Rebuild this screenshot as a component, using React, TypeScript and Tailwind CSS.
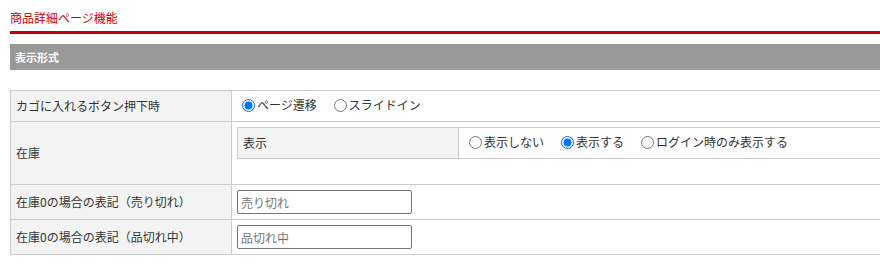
import { useState } from "react";

const font = { fontFamily: '"Noto Sans CJK JP", "Noto Sans", sans-serif' };

function Radio({
  name,
  label,
  checked,
  onChange,
}: {
  name: string;
  label: string;
  checked: boolean;
  onChange: () => void;
}) {
  return (
    <label className="inline-flex items-center mr-[12px] cursor-pointer">
      <input
        type="radio"
        name={name}
        checked={checked}
        onChange={onChange}
        className="w-[13px] h-[13px] ml-[5px] mr-[2px] my-0"
      />
      <span>{label}</span>
    </label>
  );
}

export default function App() {
  const [cart, setCart] = useState("page");
  const [stock, setStock] = useState("show");

  return (
    <div
      className="w-[880px] h-[267px] overflow-hidden bg-white text-[12px] text-[#333]"
      style={font}
    >
      <div className="ml-[10px] w-[900px]">
        {/* title */}
        <div className="h-[34px] border-b-[3px] border-[#cc0000] pt-[8px] leading-[19px] text-[#cc0000] text-[12px]">
          商品詳細ページ機能
        </div>

        <div className="mt-[10px] h-[26px] bg-[#999999] px-[5px] flex items-center text-white font-bold text-[11px]">
          表示形式
        </div>

        <table className="mt-[20px] w-[900px] border-collapse table-fixed">
          <colgroup>
            <col className="w-[221px]" />
            <col />
          </colgroup>
          <tbody>
            <tr className="h-[31px]">
              <th className="border border-[#cccccc] bg-[#f2f3f2] text-left font-normal px-[5px]">
                カゴに入れるボタン押下時
              </th>
              <td className="border border-[#cccccc] pl-[5px] pr-0">
                <Radio name="cart" label="ページ遷移" checked={cart === "page"} onChange={() => setCart("page")} />
                <Radio name="cart" label="スライドイン" checked={cart === "slide"} onChange={() => setCart("slide")} />
              </td>
            </tr>
            <tr className="h-[63px]">
              <th className="border border-[#cccccc] bg-[#f2f3f2] text-left font-normal px-[5px]">
                在庫
              </th>
              <td className="border border-[#cccccc] align-top pt-[5px] pl-[5px] pr-0">
                <table className="w-[700px] border-collapse table-fixed">
                  <colgroup>
                    <col className="w-[221px]" />
                    <col />
                  </colgroup>
                  <tbody>
                    <tr className="h-[31px]">
                      <th className="border border-[#cccccc] bg-[#f2f3f2] text-left font-normal px-[5px]">
                        表示
                      </th>
                      <td className="border border-[#cccccc] pl-[5px]">
                        <Radio name="stock" label="表示しない" checked={stock === "hide"} onChange={() => setStock("hide")} />
                        <Radio name="stock" label="表示する" checked={stock === "show"} onChange={() => setStock("show")} />
                        <Radio name="stock" label="ログイン時のみ表示する" checked={stock === "login"} onChange={() => setStock("login")} />
                      </td>
                    </tr>
                  </tbody>
                </table>
              </td>
            </tr>
            <tr className="h-[35px]">
              <th className="border border-[#cccccc] bg-[#f2f3f2] text-left font-normal px-[5px]">
                在庫0の場合の表記（売り切れ）
              </th>
              <td className="border border-[#cccccc] px-[5px]">
                <input
                  type="text"
                  placeholder="売り切れ"
                  className="block w-[175px] h-[24px] border border-[#767676] rounded-[2px] px-[3px] text-[12px] placeholder:text-[#757575]"
                />
              </td>
            </tr>
            <tr className="h-[35px]">
              <th className="border border-[#cccccc] bg-[#f2f3f2] text-left font-normal px-[5px]">
                在庫0の場合の表記（品切れ中）
              </th>
              <td className="border border-[#cccccc] px-[5px]">
                <input
                  type="text"
                  placeholder="品切れ中"
                  className="block w-[175px] h-[24px] border border-[#767676] rounded-[2px] px-[3px] text-[12px] placeholder:text-[#757575]"
                />
              </td>
            </tr>
          </tbody>
        </table>
      </div>
    </div>
  );
}
